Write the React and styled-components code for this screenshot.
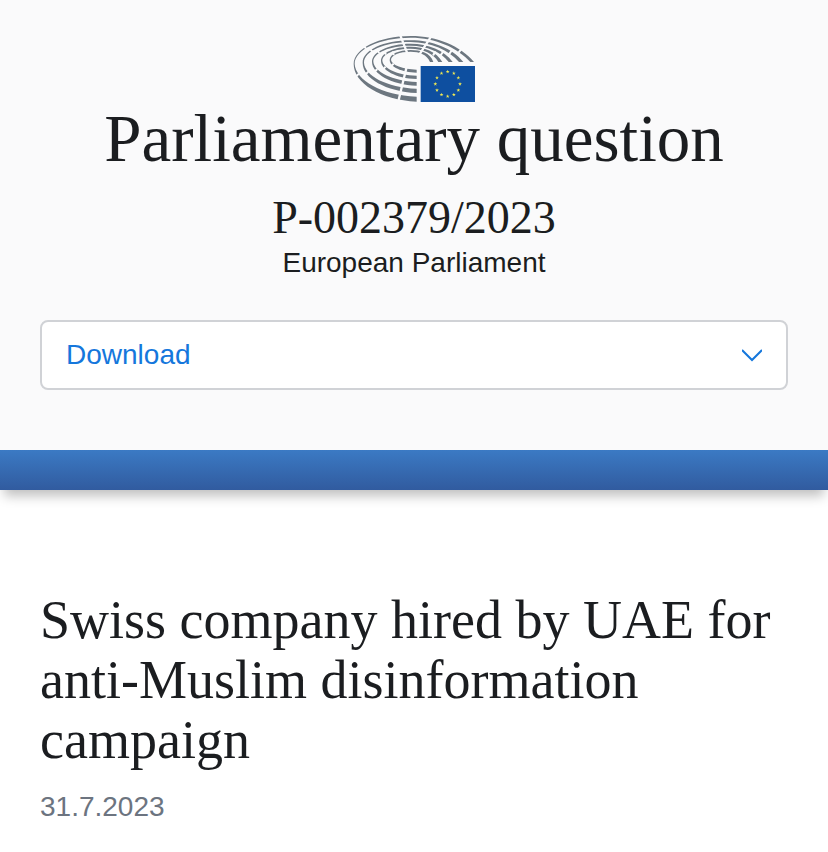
import React from "react";
import styled, { createGlobalStyle } from "styled-components";

const GlobalStyle = createGlobalStyle`
  *, *::before, *::after { box-sizing: border-box; }
  body {
    margin: 0;
    background: #fff;
    color: #1b1d20;
    font-family: "Liberation Sans", Arial, sans-serif;
    font-size: 28px;
    line-height: 32px;
  }
`;

const serif = `"Liberation Serif", "Times New Roman", serif`;

const Header = styled.header`
  display: flex;
  flex-direction: column;
  align-items: center;
  padding: 35px 40px 60px;
  background: #fafafb;
  text-align: center;
`;

const Logo = styled.svg`
  display: block;
  width: 124px;
  height: 67px;
`;

const Title = styled.h1`
  margin: 0;
  font: 400 67px/72px ${serif};
`;

const Reference = styled.p`
  margin: 20px 0 0;
  font: 400 46px/48px ${serif};
`;

const Institution = styled.p`
  margin: 5px 0 0;
`;

const DownloadButton = styled.button`
  display: flex;
  align-items: center;
  justify-content: space-between;
  width: 100%;
  height: 70px;
  margin-top: 41px;
  padding: 0 24px;
  border: 2px solid #d0d2d6;
  border-radius: 8px;
  background: #fff;
  color: #1577dc;
  font: inherit;
  cursor: pointer;
`;

const Chevron = styled.svg`
  width: 20px;
  height: 14px;
  fill: none;
  stroke: currentColor;
  stroke-width: 2;
`;

const Band = styled.div`
  height: 40px;
  background: linear-gradient(#3b7ac4, #315b9f);
  box-shadow: 0 10px 12px -4px rgba(0, 0, 0, 0.25);
`;

const Article = styled.main`
  padding: 100px 40px 28px;
`;

const Headline = styled.h2`
  margin: 0;
  font: 400 54px/60px ${serif};
`;

const DateLine = styled.time`
  display: block;
  margin-top: 21px;
  color: #6c7480;
`;

const rows = [
  "M218 221C110 216 29 165 29 108C29 62 105 24 200 24C280 24 350 54 390 102H379C342 60 275 29 200 29C108 29 32 64 32 108C35 156 112 202 218 206Z",
  "M218 195C125 190 56 151 56 104C56 67 118 37 200 37C265 37 325 61 358 102H345C315 67 260 42 200 42C121 42 60 69 60 104C62 143 127 178 218 182Z",
  "M218 173C142 170 84 137 84 101C84 72 134 47 200 47C252 47 301 66 326 102H314C292 72 248 53 200 53C137 53 88 74 88 101C90 130 145 159 218 162Z",
  "M218 153C155 151 111 126 111 98C111 75 150 56 200 56C240 56 278 71 295 102H283C270 77 236 62 200 62C153 62 115 77 115 98C117 120 158 141 218 143Z",
  "M218 134C174 133 137 117 137 96C137 79 164 66 200 66C228 66 260 74 268 102H258C250 80 226 71 200 71C167 71 141 81 141 96C143 111 176 124 218 125Z",
];

const sideAisles = [
  "M56 50l10 12M76 60l9 11M98 65l8 10M119 70l7 9M144 71l6 10",
  "M33 147l12 -10M60 143l13 -12M88 135l12 -12M114 127l11 -11M139 116l10 -9",
  "M339 80l14 -18M313 82l11 -16M289 83l10 -14M267 82l8 -12",
].join("");

const star = "M0 -6L1.4 -1.9H5.7L2.2 .7L3.5 4.9L0 2.3L-3.5 4.9L-2.2 .7L-5.7 -1.9H-1.4Z";
const starAngles = Array.from({ length: 12 }, (_, i) => (i * Math.PI) / 6);

function ParliamentLogo() {
  return (
    <Logo viewBox="24 21 372 201" role="img" aria-label="European Parliament">
      <mask id="aisles" maskUnits="userSpaceOnUse" x="20" y="20" width="380" height="205">
        <rect x="20" y="20" width="380" height="205" fill="#fff" />
        <g fill="none" stroke="#000">
          <path d="M168 20L190 76M265 20L226 80M162 224L188 116" strokeWidth="7" />
          <path d={sideAisles} strokeWidth="6" />
        </g>
      </mask>
      <g fill="#6d7780" mask="url(#aisles)">
        {rows.map((d) => (
          <path key={d} d={d} />
        ))}
      </g>
      <path d="M230 114H393V222H230Z" fill="#0e4fa0" />
      <g fill="#f3ea52">
        {starAngles.map((a) => (
          <path
            key={a}
            d={star}
            transform={`translate(${311 + 37 * Math.sin(a)} ${168 - 37 * Math.cos(a)})`}
          />
        ))}
      </g>
    </Logo>
  );
}

export default function App() {
  return (
    <>
      <GlobalStyle />
      <Header>
        <ParliamentLogo />
        <Title>Parliamentary question</Title>
        <Reference>P-002379/2023</Reference>
        <Institution>European Parliament</Institution>
        <DownloadButton type="button" aria-haspopup="true">
          Download
          <Chevron viewBox="0 0 20 14" aria-hidden="true">
            <path d="M0 2L10 12L20 2" />
          </Chevron>
        </DownloadButton>
      </Header>
      <Band />
      <Article>
        <Headline>Swiss company hired by UAE for anti-Muslim disinformation campaign</Headline>
        <DateLine dateTime="2023-07-31">31.7.2023</DateLine>
      </Article>
    </>
  );
}
